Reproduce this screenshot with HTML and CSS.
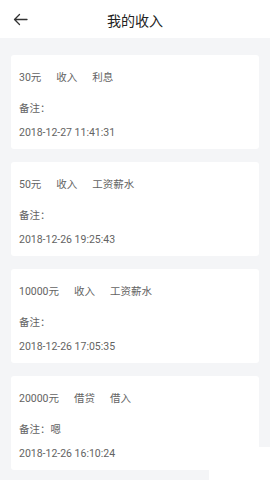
FILE: index.html
```html
<!DOCTYPE html>
<html lang="zh-CN">
  <head>
    <meta charset="utf-8">
    <meta name="viewport" content="width=device-width, initial-scale=1">
    <title>我的收入</title>
    <link rel="stylesheet" href="styles.css">
  </head>
  <body>
    <header class="topbar">
      <a class="back" href="#">
        <svg width="15" height="13" viewBox="0 0 15 13" fill="none" stroke="#333" stroke-width="1.3" stroke-linecap="round" stroke-linejoin="round">
          <path d="M14 6.5H1.5M6.5 1.5L1.5 6.5L6.5 11.5"/>
        </svg>
      </a>
      <h1>我的收入</h1>
    </header>

    <div class="list">
      <div class="card">
        <div class="row meta"><span>30元</span><span>收入</span><span>利息</span></div>
        <div class="row note">备注：</div>
        <div class="row time">2018-12-27 11:41:31</div>
      </div>
      <div class="card">
        <div class="row meta"><span>50元</span><span>收入</span><span>工资薪水</span></div>
        <div class="row note">备注：</div>
        <div class="row time">2018-12-26 19:25:43</div>
      </div>
      <div class="card">
        <div class="row meta"><span>10000元</span><span>收入</span><span>工资薪水</span></div>
        <div class="row note">备注：</div>
        <div class="row time">2018-12-26 17:05:35</div>
      </div>
      <div class="card">
        <div class="row meta"><span>20000元</span><span>借贷</span><span>借入</span></div>
        <div class="row note">备注：嗯</div>
        <div class="row time">2018-12-26 16:10:24</div>
      </div>
    </div>
    <div class="patch"></div>
  </body>
</html>
```

FILE: styles.css
```css
html, body {
  margin: 0;
  padding: 0;
}
body {
  background: #f4f5f7;
  font-family: Roboto, "Noto Sans CJK SC", sans-serif;
  color: #636363;
  min-height: 480px;
  position: relative;
  overflow: hidden;
}
.topbar {
  height: 38px;
  background: #fff;
  display: flex;
  align-items: center;
  justify-content: center;
  position: relative;
}
.back {
  position: absolute;
  left: 13px;
  top: 13px;
  display: block;
  line-height: 0;
}
.topbar h1 {
  margin: 2px 0 0 0;
  font-size: 14px;
  font-weight: normal;
  color: #222;
}
.list {
  padding: 17px 11px;
  display: flex;
  flex-direction: column;
  gap: 13px;
}
.card {
  background: #fff;
  border-radius: 3px;
  height: 94px;
  box-sizing: border-box;
  padding: 15px 8px 0 8px;
  font-size: 10.5px;
}
.row {
  height: 16px;
  line-height: 16px;
}
.meta span {
  margin-right: 15px;
}
.note {
  margin-top: 15px;
}
.time {
  margin-top: 8px;
}
.patch {
  position: absolute;
  left: 209px;
  top: 447px;
  width: 61px;
  height: 33px;
  background: #fff;
}
```
